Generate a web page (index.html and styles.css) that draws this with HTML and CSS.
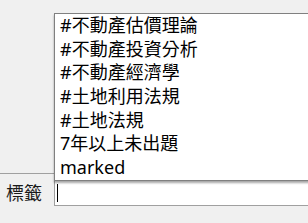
FILE: index.html
```html
<!DOCTYPE html>
<html lang="zh-Hant">
<head>
    <meta charset="UTF-8">
    <title>標籤</title>
    <link rel="stylesheet" href="styles.css">
</head>
<body>

    <!-- area behind the popup -->
    <div class="upper"></div>

    <!-- tag field -->
    <div class="field-row">
        <label class="field-label">標籤</label>
        <div class="field-input"><span class="caret"></span></div>
    </div>

    <!-- autocomplete list -->
    <ul class="suggest">
        <li>#不動產估價理論</li>
        <li>#不動產投資分析</li>
        <li>#不動產經濟學</li>
        <li>#土地利用法規</li>
        <li>#土地法規</li>
        <li>7年以上未出題</li>
        <li>marked</li>
    </ul>

</body>
</html>
```

FILE: styles.css
```css
html, body {
    margin: 0;
    padding: 0;
    background-color: #f0f0f0;
    overflow: hidden;
    font-family: "Noto Sans", "Noto Sans CJK TC", sans-serif;
}

.upper {
    height: 173px;
    border-bottom: 1px solid #a0a0a0;
}

.field-row {
    display: flex;
    align-items: center;
    padding: 5px 0 0 6px;
}

.field-label {
    width: 48px;
    font-size: 18px;
    line-height: 24px;
    color: #1a1a1a;
}

.field-input {
    flex: 1;
    height: 25px;
    padding-left: 2px;
    background: white;
    border: 1px solid #a0a0a0;
    border-right: none;
    display: flex;
    align-items: center;
}

.caret {
    width: 1px;
    height: 18px;
    background: black;
}

/* popup list */
.suggest {
    position: absolute;
    left: 54px;
    top: 13px;
    right: -2px;
    margin: 0;
    padding: 0;
    list-style: none;
    background: white;
    border: 1px solid #808080;
    box-shadow: 0 2px 2px rgba(0, 0, 0, 0.35);
}

.suggest li {
    height: 23.7px;
    line-height: 23.7px;
    padding-left: 5px;
    font-size: 18px;
    color: black;
    white-space: nowrap;
}
```
